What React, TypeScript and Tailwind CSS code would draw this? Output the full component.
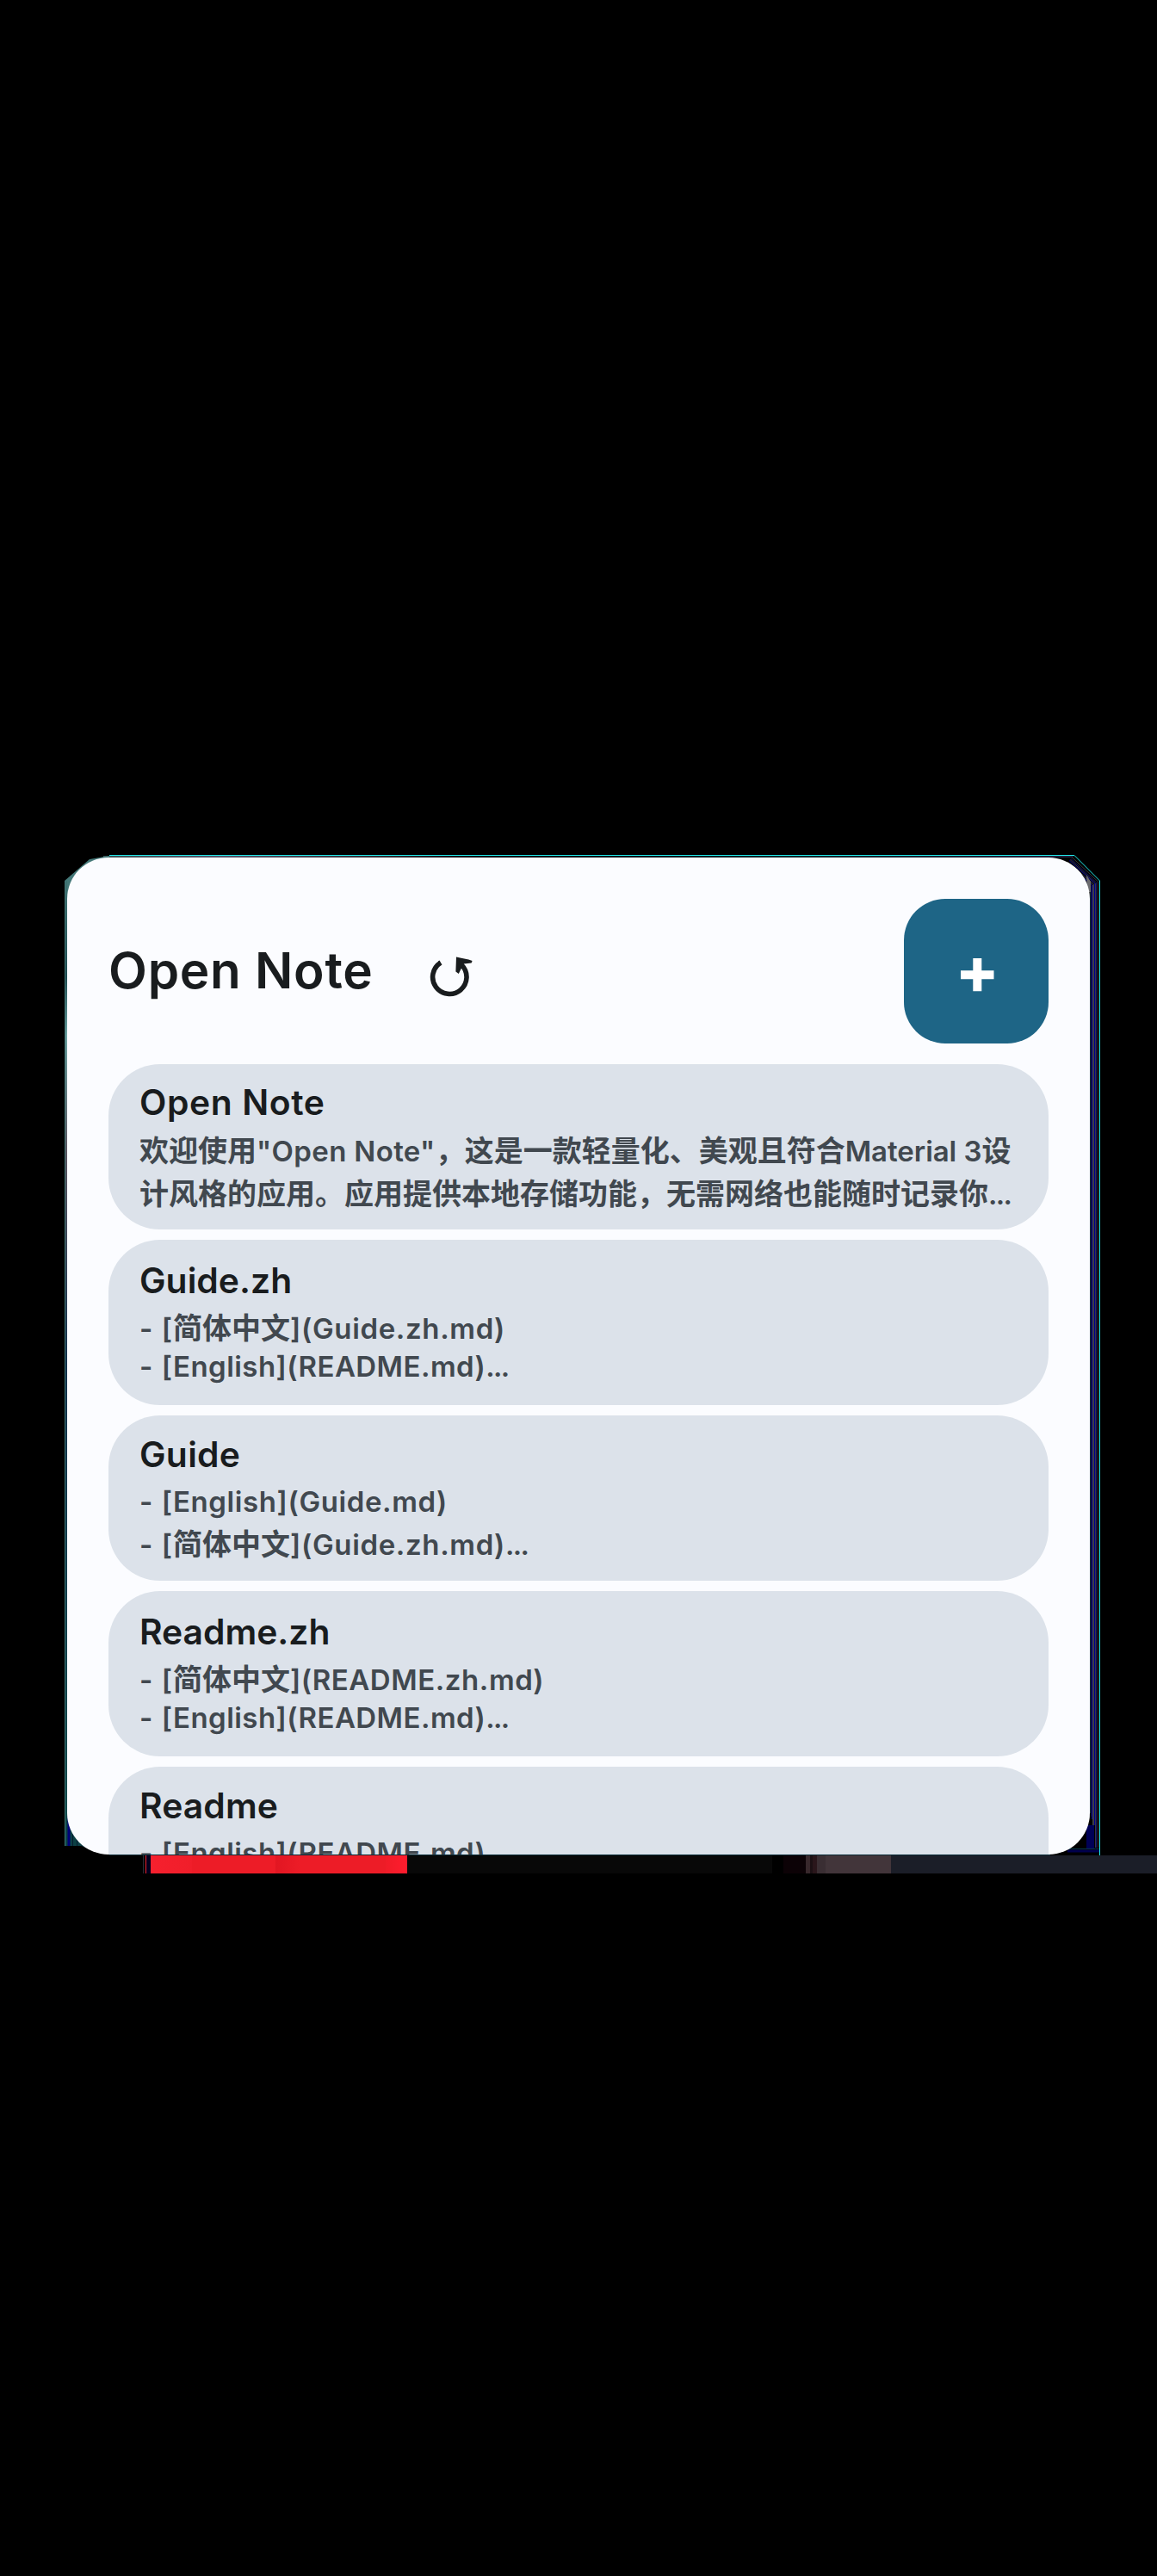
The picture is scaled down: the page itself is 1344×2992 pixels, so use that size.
type Run = { text: string; className: string };

type Note = {
  title: string;
  titleClass: string;
  cardClass: string;
  bodyClass: string;
  lines: Run[][];
};

const cjk = "text-[34px] font-bold";
const dots = "text-[32.6px] tracking-[-1.6px]";

const notes: Note[] = [
  {
    title: "Open Note",
    titleClass: "tracking-[0.6px]",
    cardClass: "pt-[20.4px]",
    bodyClass: "mt-[6.4px] leading-[49px]",
    lines: [
      [
        { text: "欢迎使用", className: cjk },
        { text: '"Open Note"', className: "text-[33px] tracking-[0.35px]" },
        { text: "，这是一款轻量化、美观且符合", className: cjk },
        { text: "Material 3", className: "text-[33px] tracking-[-0.05px]" },
        { text: "设", className: cjk },
      ],
      [
        { text: "计风格的应用。应用提供本地存储功能，无需网络也能随时记录你", className: cjk },
        { text: "...", className: dots },
      ],
    ],
  },
  {
    title: "Guide.zh",
    titleClass: "tracking-[0.05px]",
    cardClass: "pt-[23.2px]",
    bodyClass: "mt-[9.2px] leading-[43px]",
    lines: [
      [
        { text: "- [", className: "text-[33px] tracking-[1px]" },
        { text: "简体中文", className: cjk },
        { text: "](Guide.zh.md)", className: "text-[33px] tracking-[0.65px]" },
      ],
      [
        { text: "- [", className: "text-[33px] tracking-[1px]" },
        { text: "English](README.md)", className: "text-[33px] tracking-[0.45px]" },
        { text: "...", className: dots },
      ],
    ],
  },
  {
    title: "Guide",
    titleClass: "tracking-[0.3px]",
    cardClass: "pt-[21.4px]",
    bodyClass: "mt-[4.3px] leading-[49px]",
    lines: [
      [
        { text: "- [", className: "text-[33px] tracking-[1px]" },
        { text: "English](Guide.md)", className: "text-[33px] tracking-[0.6px]" },
      ],
      [
        { text: "- [", className: "text-[33px] tracking-[1px]" },
        { text: "简体中文", className: cjk },
        { text: "](Guide.zh.md)", className: "text-[33px] tracking-[0.65px]" },
        { text: "...", className: dots },
      ],
    ],
  },
  {
    title: "Readme.zh",
    titleClass: "tracking-[0px]",
    cardClass: "pt-[23.2px]",
    bodyClass: "mt-[9.2px] leading-[43px]",
    lines: [
      [
        { text: "- [", className: "text-[33px] tracking-[1px]" },
        { text: "简体中文", className: cjk },
        { text: "](README.zh.md)", className: "text-[33px] tracking-[0.55px]" },
      ],
      [
        { text: "- [", className: "text-[33px] tracking-[1px]" },
        { text: "English](README.md)", className: "text-[33px] tracking-[0.45px]" },
        { text: "...", className: dots },
      ],
    ],
  },
  {
    title: "Readme",
    titleClass: "tracking-[0.1px]",
    cardClass: "pt-[21.4px]",
    bodyClass: "mt-[4.3px] leading-[49px]",
    lines: [
      [
        { text: "- [", className: "text-[33px] tracking-[1px]" },
        { text: "English](README.md)", className: "text-[33px] tracking-[0.45px]" },
      ],
    ],
  },
];

function RefreshIcon() {
  return (
    <svg viewBox="0 0 48 48" className="mt-2 h-12 w-12 shrink-0 overflow-visible" fill="none">
      <path d="M13 10A19.7 19.7 0 1 0 37.4 13" stroke="#191c1e" strokeWidth="5.6" />
      <path
        d="M31 3.6 35.5 4.6 45.3 6.4 49.6 8 48.6 10.4 39.8 11.6 36 18.5 33.8 23 30.4 20.4Z"
        fill="#191c1e"
      />
    </svg>
  );
}

function PlusIcon() {
  return (
    <svg viewBox="0 0 40 40" className="mt-2 ml-[2px] h-10 w-10" fill="#ffffff">
      <path d="M15.3 1H25.3V15.2H39.5V25.2H25.3V39.2H15.3V25.2H1V15.2H15.3Z" />
    </svg>
  );
}

const rightContours = [
  { d: "M1245 995.5L1275.5 1024V2146", color: "#38363c" },
  { d: "M1244 997.5L1273.5 1025V2146", color: "#12126c" },
  { d: "M1243 998.5L1272.5 1026V2146", color: "#35334f" },
  { d: "M1242 999.5L1271.5 1026V2120", color: "#00008a" },
  { d: "M1240 1001L1270.5 1027V2120", color: "#3c3c40" },
  { d: "M1239 1001.5L1269.5 1028V2120", color: "#3c3c50" },
  { d: "M1238 1002L1268.5 1028V2113", color: "#00008a" },
  { d: "M1237 1003L1267.5 1029V2110", color: "#10102c" },
  { d: "M1236 1003L1266.5 1030V2106", color: "#18323c" },
];

function PanelEdge() {
  return (
    <svg
      viewBox="75 992 1204 1164"
      className="absolute -top-1 -left-[3px] h-[1164px] w-[1204px]"
      fill="none"
    >
      <defs>
        <linearGradient id="topEdge" x1="0" x2="1">
          <stop offset="0" stopColor="#3a5555" />
          <stop offset="0.12" stopColor="#55586c" />
          <stop offset="0.3" stopColor="#2c2c30" />
          <stop offset="0.4" stopColor="#04040c" />
          <stop offset="0.7" stopColor="#0c2a2c" />
          <stop offset="1" stopColor="#20203a" />
        </linearGradient>
        <linearGradient id="leftEdge" x1="0" y1="0" x2="0" y2="1">
          <stop offset="0" stopColor="#3f7272" />
          <stop offset="0.1" stopColor="#1d4a50" />
          <stop offset="0.16" stopColor="#6aa0a0" />
          <stop offset="0.28" stopColor="#5a5560" />
          <stop offset="0.5" stopColor="#10304a" />
          <stop offset="1" stopColor="#0c4a4a" />
        </linearGradient>
      </defs>
      <rect x="120" y="994" width="1126" height="2" fill="url(#topEdge)" />
      <path d="M127 993.5H1248L1277.5 1023V2155" stroke="#20e8ea" />
      {rightContours.map((line) => (
        <path key={line.d} d={line.d} stroke={line.color} />
      ))}
      <path d="M1262 1016L1267 1024V1036H1263Z" fill="#6c6c70" />
      <path d="M75 1023L104 998L127 994V1004L78 1050H75Z" fill="#447878" />
      <rect x="76" y="1023" width="2" height="1121" fill="url(#leftEdge)" />
      <path d="M75.5 1023V2144" stroke="#417373" />
      <path d="M77 2110V2144H100V2110Z" fill="#0c4044" />
      <path d="M80 2110V2144" stroke="#00007a" strokeWidth="3" />
      <path d="M84.5 2110V2144M89.5 2110V2144" stroke="#061c30" />
      <path d="M94 2144L112 2150H127V2146L94 2130Z" fill="#08323c" />
      <path d="M1262 2120H1271V2147H1262Z" fill="#000056" />
      <path d="M1240 2147.5H1277" stroke="#083848" />
      <path d="M1240 2150H1277" stroke="#00004e" strokeWidth="3" />
      <path d="M127 2154.5H1220" stroke="#0a2c38" />
    </svg>
  );
}

function NoteCard({ note }: { note: Note }) {
  return (
    <article
      className={`h-48 shrink-0 overflow-hidden rounded-[60px] bg-[#dce2ea] px-9 whitespace-pre ${note.cardClass}`}
    >
      <h2 className={`h-[49px] text-[40.8px] leading-[49px] font-semibold text-[#191c1e] ${note.titleClass}`}>
        {note.title}
      </h2>
      <div className={`text-[34px] font-semibold text-[#41484f] ${note.bodyClass}`}>
        {note.lines.map((line, i) => (
          <p key={i}>
            {line.map((run, j) => (
              <span key={j} className={run.className}>
                {run.text}
              </span>
            ))}
          </p>
        ))}
      </div>
    </article>
  );
}

function BackdropStrip() {
  return (
    <div className="mt-px flex h-[21px] bg-black">
      <div className="w-[166px]" />
      <div className="w-px bg-[#2b2b35]" />
      <div className="w-[2px]" />
      <div className="w-px bg-[#f02030]" />
      <div className="w-[5px] bg-[#00001e]" />
      <div className="w-[48px] bg-linear-to-r from-[#f6202e] to-[#f01e2a]" />
      <div className="w-[97px] bg-[#ed1c27]" />
      <div className="w-[30px] bg-linear-to-r from-[#e21622] to-[#ed1c27]" />
      <div className="w-[98px] bg-[#ed1c27]" />
      <div className="w-[25px] bg-linear-to-r from-[#f01c28] to-[#ff1c2e]" />
      <div className="w-[424px] bg-[#080808]" />
      <div className="w-[13px] bg-black" />
      <div className="w-[26px] bg-[#0c0206]" />
      <div className="w-[5px] bg-[#38282c]" />
      <div className="w-[3px] bg-[#1c1014]" />
      <div className="w-[5px] bg-[#2a161b]" />
      <div className="w-[10px] bg-[#3a2e33]" />
      <div className="w-[76px] bg-[#42353a]" />
      <div className="flex-1 bg-[#1b1e28]" />
    </div>
  );
}

export default function App() {
  return (
    <main className="h-[2992px] w-[1344px] overflow-hidden bg-black pt-[996px] font-['Inter','Noto_Sans_CJK_SC',sans-serif]">
      <div className="relative ml-[78px] h-[1158px] w-[1188px]">
        <PanelEdge />
        <section className="relative flex h-full flex-col overflow-hidden rounded-[48px] bg-[#fbfcff] px-12 pt-12">
          <header className="mb-6 flex h-[168px] shrink-0 items-center">
            <h1 className="mb-[2px] w-[373px] shrink-0 text-[58.4px] leading-none font-semibold tracking-[0.75px] whitespace-nowrap text-[#191c1e]">
              Open Note
            </h1>
            <RefreshIcon />
            <button className="ml-auto flex h-[168px] w-[168px] items-center justify-center rounded-[48px] bg-[#1e6586]">
              <PlusIcon />
            </button>
          </header>
          <div className="flex flex-col gap-3">
            {notes.map((note) => (
              <NoteCard key={note.title} note={note} />
            ))}
          </div>
        </section>
      </div>
      <BackdropStrip />
    </main>
  );
}
